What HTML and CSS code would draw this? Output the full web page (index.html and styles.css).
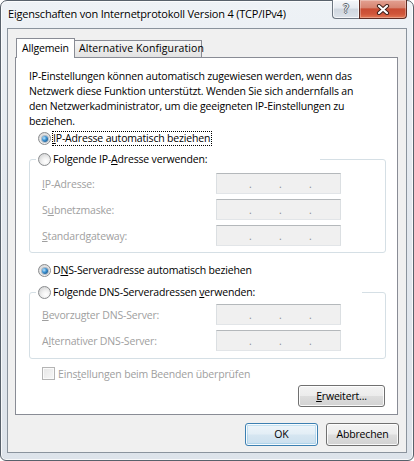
FILE: index.html
```html
<!DOCTYPE html>
<html lang="de">
<head>
<meta charset="utf-8">
<title>Eigenschaften von Internetprotokoll Version 4 (TCP/IPv4)</title>
<link rel="stylesheet" href="styles.css">
</head>
<body>
<div class="window">
  <div class="titlebar">
    <div class="title">Eigenschaften von Internetprotokoll Version 4 (TCP/IPv4)</div>
    <div class="caption">
      <div class="cap-btn help"><span>?</span></div>
      <div class="cap-btn close">
        <svg width="14" height="11" viewBox="0 0 14 11">
          <path d="M3 2 L11 9 M11 2 L3 9" stroke="#40201a" stroke-width="4.2" stroke-linecap="round"/>
          <path d="M3 2 L11 9 M11 2 L3 9" stroke="#ffffff" stroke-width="2.2" stroke-linecap="round"/>
        </svg>
      </div>
    </div>
  </div>
  <div class="client">
    <div class="tabs">
      <div class="tab active">Allgemein</div>
      <div class="tab inactive">Alternative Konfiguration</div>
    </div>
    <div class="page">
      <p class="intro">IP-Einstellungen können automatisch zugewiesen werden, wenn das<br>Netzwerk diese Funktion unterstützt. Wenden Sie sich andernfalls an<br>den Netzwerkadministrator, um die geeigneten IP-Einstellungen zu<br>beziehen.</p>

      <div class="option opt-first"><span class="radio checked"></span><span class="label focus"><u>I</u>P-Adresse automatisch beziehen</span></div>

      <fieldset class="group group-ip">
        <legend class="option legend legend-ip"><span class="radio"></span><span class="label">Folgende IP-<u>A</u>dresse verwenden:</span></legend>
        <div class="field field-first"><span class="field-label"><u>I</u>P-Adresse:</span><span class="ipbox"><i>.</i><i>.</i><i>.</i></span></div>
        <div class="field"><span class="field-label">S<u>u</u>bnetzmaske:</span><span class="ipbox"><i>.</i><i>.</i><i>.</i></span></div>
        <div class="field"><span class="field-label"><u>S</u>tandardgateway:</span><span class="ipbox"><i>.</i><i>.</i><i>.</i></span></div>
      </fieldset>

      <div class="option opt-dns"><span class="radio checked"></span><span class="label">D<u>N</u>S-Serveradresse automatisch beziehen</span></div>

      <fieldset class="group group-dns">
        <legend class="option legend legend-dns"><span class="radio"></span><span class="label">Folgende DNS-Serveradressen <u>v</u>erwenden:</span></legend>
        <div class="field field-first"><span class="field-label"><u>B</u>evorzugter DNS-Server:</span><span class="ipbox"><i>.</i><i>.</i><i>.</i></span></div>
        <div class="field"><span class="field-label">A<u>l</u>ternativer DNS-Server:</span><span class="ipbox"><i>.</i><i>.</i><i>.</i></span></div>
      </fieldset>

      <div class="check-row"><span class="checkbox"></span><span class="check-label">Eins<u>t</u>ellungen beim Beenden überprüfen</span></div>

      <div class="adv-row"><div class="btn btn-adv"><span><u>E</u>rweitert...</span></div></div>
    </div>
    <div class="footer">
      <div class="btn btn-default">OK</div>
      <div class="btn">Abbrechen</div>
    </div>
  </div>
</div>
</body>
</html>
```
FILE: styles.css
```css
html, body {
  margin: 0;
  padding: 0;
}

body {
  width: 414px;
  height: 461px;
  overflow: hidden;
  background: #ffffff;
  font-family: "Open Sans", "Noto Sans", sans-serif;
  font-size: 10.5px;
  letter-spacing: -0.17px;
  color: #000000;
}

u {
  text-decoration: underline;
  text-underline-offset: 1px;
}

.window {
  box-sizing: border-box;
  width: 414px;
  height: 461px;
  border: 1px solid #58616b;
  border-radius: 7px 7px 6px 6px;
  background: linear-gradient(180deg, #eef2f6 0%, #e4e9ef 40%, #dde3ea 100%);
  box-shadow: inset 0 0 0 1px rgba(255, 255, 255, 0.75);
  padding: 0 6px 7px 6px;
  display: flex;
  flex-direction: column;
}

/* title bar */
.titlebar {
  height: 27px;
  display: flex;
  justify-content: space-between;
  align-items: flex-start;
}

.title {
  margin: 5px 0 0 1px;
  line-height: 15px;
  font-size: 11px;
  letter-spacing: -0.2px;
  color: #000;
  text-shadow: 0 0 6px #ffffff, 0 0 3px #ffffff;
  white-space: nowrap;
}

.caption {
  display: flex;
  margin-top: -1px;
}

.cap-btn {
  box-sizing: border-box;
  height: 19px;
  display: flex;
  align-items: center;
  justify-content: center;
  border-style: solid;
  border-width: 0 1px 1px 1px;
}

.help {
  width: 27px;
  border-color: #6d7681;
  border-right-width: 0;
  border-radius: 0 0 0 4px;
  background: linear-gradient(180deg, #f5f7fa 0%, #e6eaf0 45%, #cfd6df 50%, #dde3ea 100%);
  box-shadow: inset 0 0 0 1px rgba(255, 255, 255, 0.7);
}

.help span {
  font-family: "DejaVu Sans", sans-serif;
  font-size: 12px;
  line-height: 12px;
  letter-spacing: 0;
  color: #f4f6f8;
  text-shadow: 1px 0 0 #5a646f, -1px 0 0 #5a646f, 0 1px 0 #5a646f, 0 -1px 0 #5a646f;
}

.close {
  width: 48px;
  border-color: #5e2b22;
  border-radius: 0 0 4px 0;
  background: linear-gradient(180deg, #e3a192 0%, #d78572 42%, #c84c33 50%, #d0563a 78%, #e27955 100%);
  box-shadow: inset 0 0 0 1px rgba(255, 255, 255, 0.3);
}

/* client area */
.client {
  box-sizing: border-box;
  height: 425px;
  border: 1px solid #8a939d;
  background: #f0f0f0;
  padding: 9px 8px 6px 7px;
  display: flex;
  flex-direction: column;
}

.tabs {
  display: flex;
  align-items: flex-end;
  height: 20px;
  margin: 0 0 -1px 1px;
  position: relative;
  z-index: 1;
}

.tab {
  box-sizing: border-box;
  border: 1px solid #898c95;
  border-bottom: none;
  line-height: 15px;
  white-space: nowrap;
}

.tab.active {
  width: 59px;
  height: 20px;
  padding: 2px 0 0 5px;
  background: #ffffff;
  position: relative;
  z-index: 2;
}

.tab.inactive {
  width: 128px;
  height: 17px;
  margin: 0 0 1px -1px;
  padding: 0 0 0 4px;
  letter-spacing: 0.1px;
  background: linear-gradient(180deg, #f6f6f6 0%, #ececec 50%, #e2e2e2 100%);
}

.page {
  box-sizing: border-box;
  width: 383px;
  border: 1px solid #898c95;
  background: #ffffff;
  padding: 11px 0 7px 0;
  display: flex;
  flex-direction: column;
}

.intro {
  margin: 0 0 0 13px;
  line-height: 15px;
  white-space: nowrap;
}

.option {
  display: flex;
  align-items: center;
  height: 15px;
}

.opt-first {
  margin: 2px 0 0 22px;
}

.opt-dns {
  margin: 10px 0 0 22px;
}

.radio {
  box-sizing: border-box;
  width: 13px;
  height: 13px;
  flex: none;
  border-radius: 50%;
  border: 1px solid #8a8c8e;
  background: radial-gradient(circle at 62% 68%, #ffffff 0%, #f2f2f2 35%, #c9cacb 100%);
  margin-right: 1px;
  display: flex;
  align-items: center;
  justify-content: center;
}

.radio.checked::after {
  content: "";
  width: 6px;
  height: 6px;
  border-radius: 50%;
  background: radial-gradient(circle at 35% 35%, #bfe6fb 0%, #3d93d4 40%, #1c5a8c 80%, #16476f 100%);
  box-shadow: 0 0 0 1px rgba(60, 90, 120, 0.35);
}

.label {
  box-sizing: border-box;
  display: inline-block;
  height: 15px;
  line-height: 13px;
  border: 1px solid transparent;
  white-space: nowrap;
}

.label.focus {
  border: 1px dotted #000000;
  padding-right: 1px;
}

.group {
  margin: 6px 11px 0 13px;
  padding: 6px 0 6px 6px;
  border: 1px solid #d5dfe5;
  border-radius: 3px;
  min-width: 0;
}

.group-dns {
  margin-top: 7px;
  padding-top: 4px;
  padding-bottom: 7px;
}

.legend {
  box-sizing: border-box;
  padding: 0 0 0 2px;
  margin: 0;
}

.legend-ip {
  width: 284px;
}

.legend-dns {
  width: 326px;
}

.field {
  display: flex;
  align-items: center;
  height: 21px;
  margin: 5px 0 0 6px;
}

.field.field-first {
  margin-top: 0;
}

.field-label {
  width: 174px;
  color: #a0a0a0;
  white-space: nowrap;
}

.ipbox {
  box-sizing: border-box;
  width: 125px;
  height: 21px;
  border: 1px solid;
  border-color: #b4b8bb #dbdfe2 #e2e5e8 #dbdfe2;
  background: #f0f0f0;
  display: flex;
  align-items: center;
  padding: 1px 0 0 32px;
}

.ipbox i {
  font-style: normal;
  width: 30px;
  color: #8f8f8f;
  line-height: 15px;
}

.check-row {
  display: flex;
  align-items: center;
  height: 15px;
  margin: 7px 0 0 26px;
}

.checkbox {
  box-sizing: border-box;
  width: 13px;
  height: 13px;
  border: 1px solid #b4b4b4;
  background: linear-gradient(135deg, #e6e6e6 0%, #f7f7f7 100%);
  box-shadow: inset 0 0 0 1px #fafafa;
  margin-right: 3px;
}

.check-label {
  color: #a0a0a0;
  white-space: nowrap;
}

.adv-row {
  display: flex;
  justify-content: flex-end;
  margin: 4px 12px 0 0;
}

/* buttons */
.btn {
  box-sizing: border-box;
  width: 73px;
  height: 23px;
  border: 1px solid #707070;
  border-radius: 3px;
  background: linear-gradient(180deg, #f3f3f3 0%, #ececec 48%, #dddddd 52%, #d2d2d2 100%);
  box-shadow: inset 0 0 0 1px rgba(255, 255, 255, 0.85);
  display: flex;
  align-items: center;
  justify-content: center;
  line-height: 15px;
  white-space: nowrap;
}

.btn-adv {
  width: 87px;
  height: 22px;
}

.btn-default {
  border-color: #3c7fb1;
  background: linear-gradient(180deg, #eef5fa 0%, #e3eef6 48%, #d6e6f1 52%, #cbdfee 100%);
  box-shadow: inset 0 0 0 1px rgba(255, 255, 255, 0.9), inset 0 0 0 2px rgba(120, 190, 230, 0.35);
}

.footer {
  display: flex;
  justify-content: flex-end;
  gap: 8px;
  margin: 8px -1px 0 0;
}
```
